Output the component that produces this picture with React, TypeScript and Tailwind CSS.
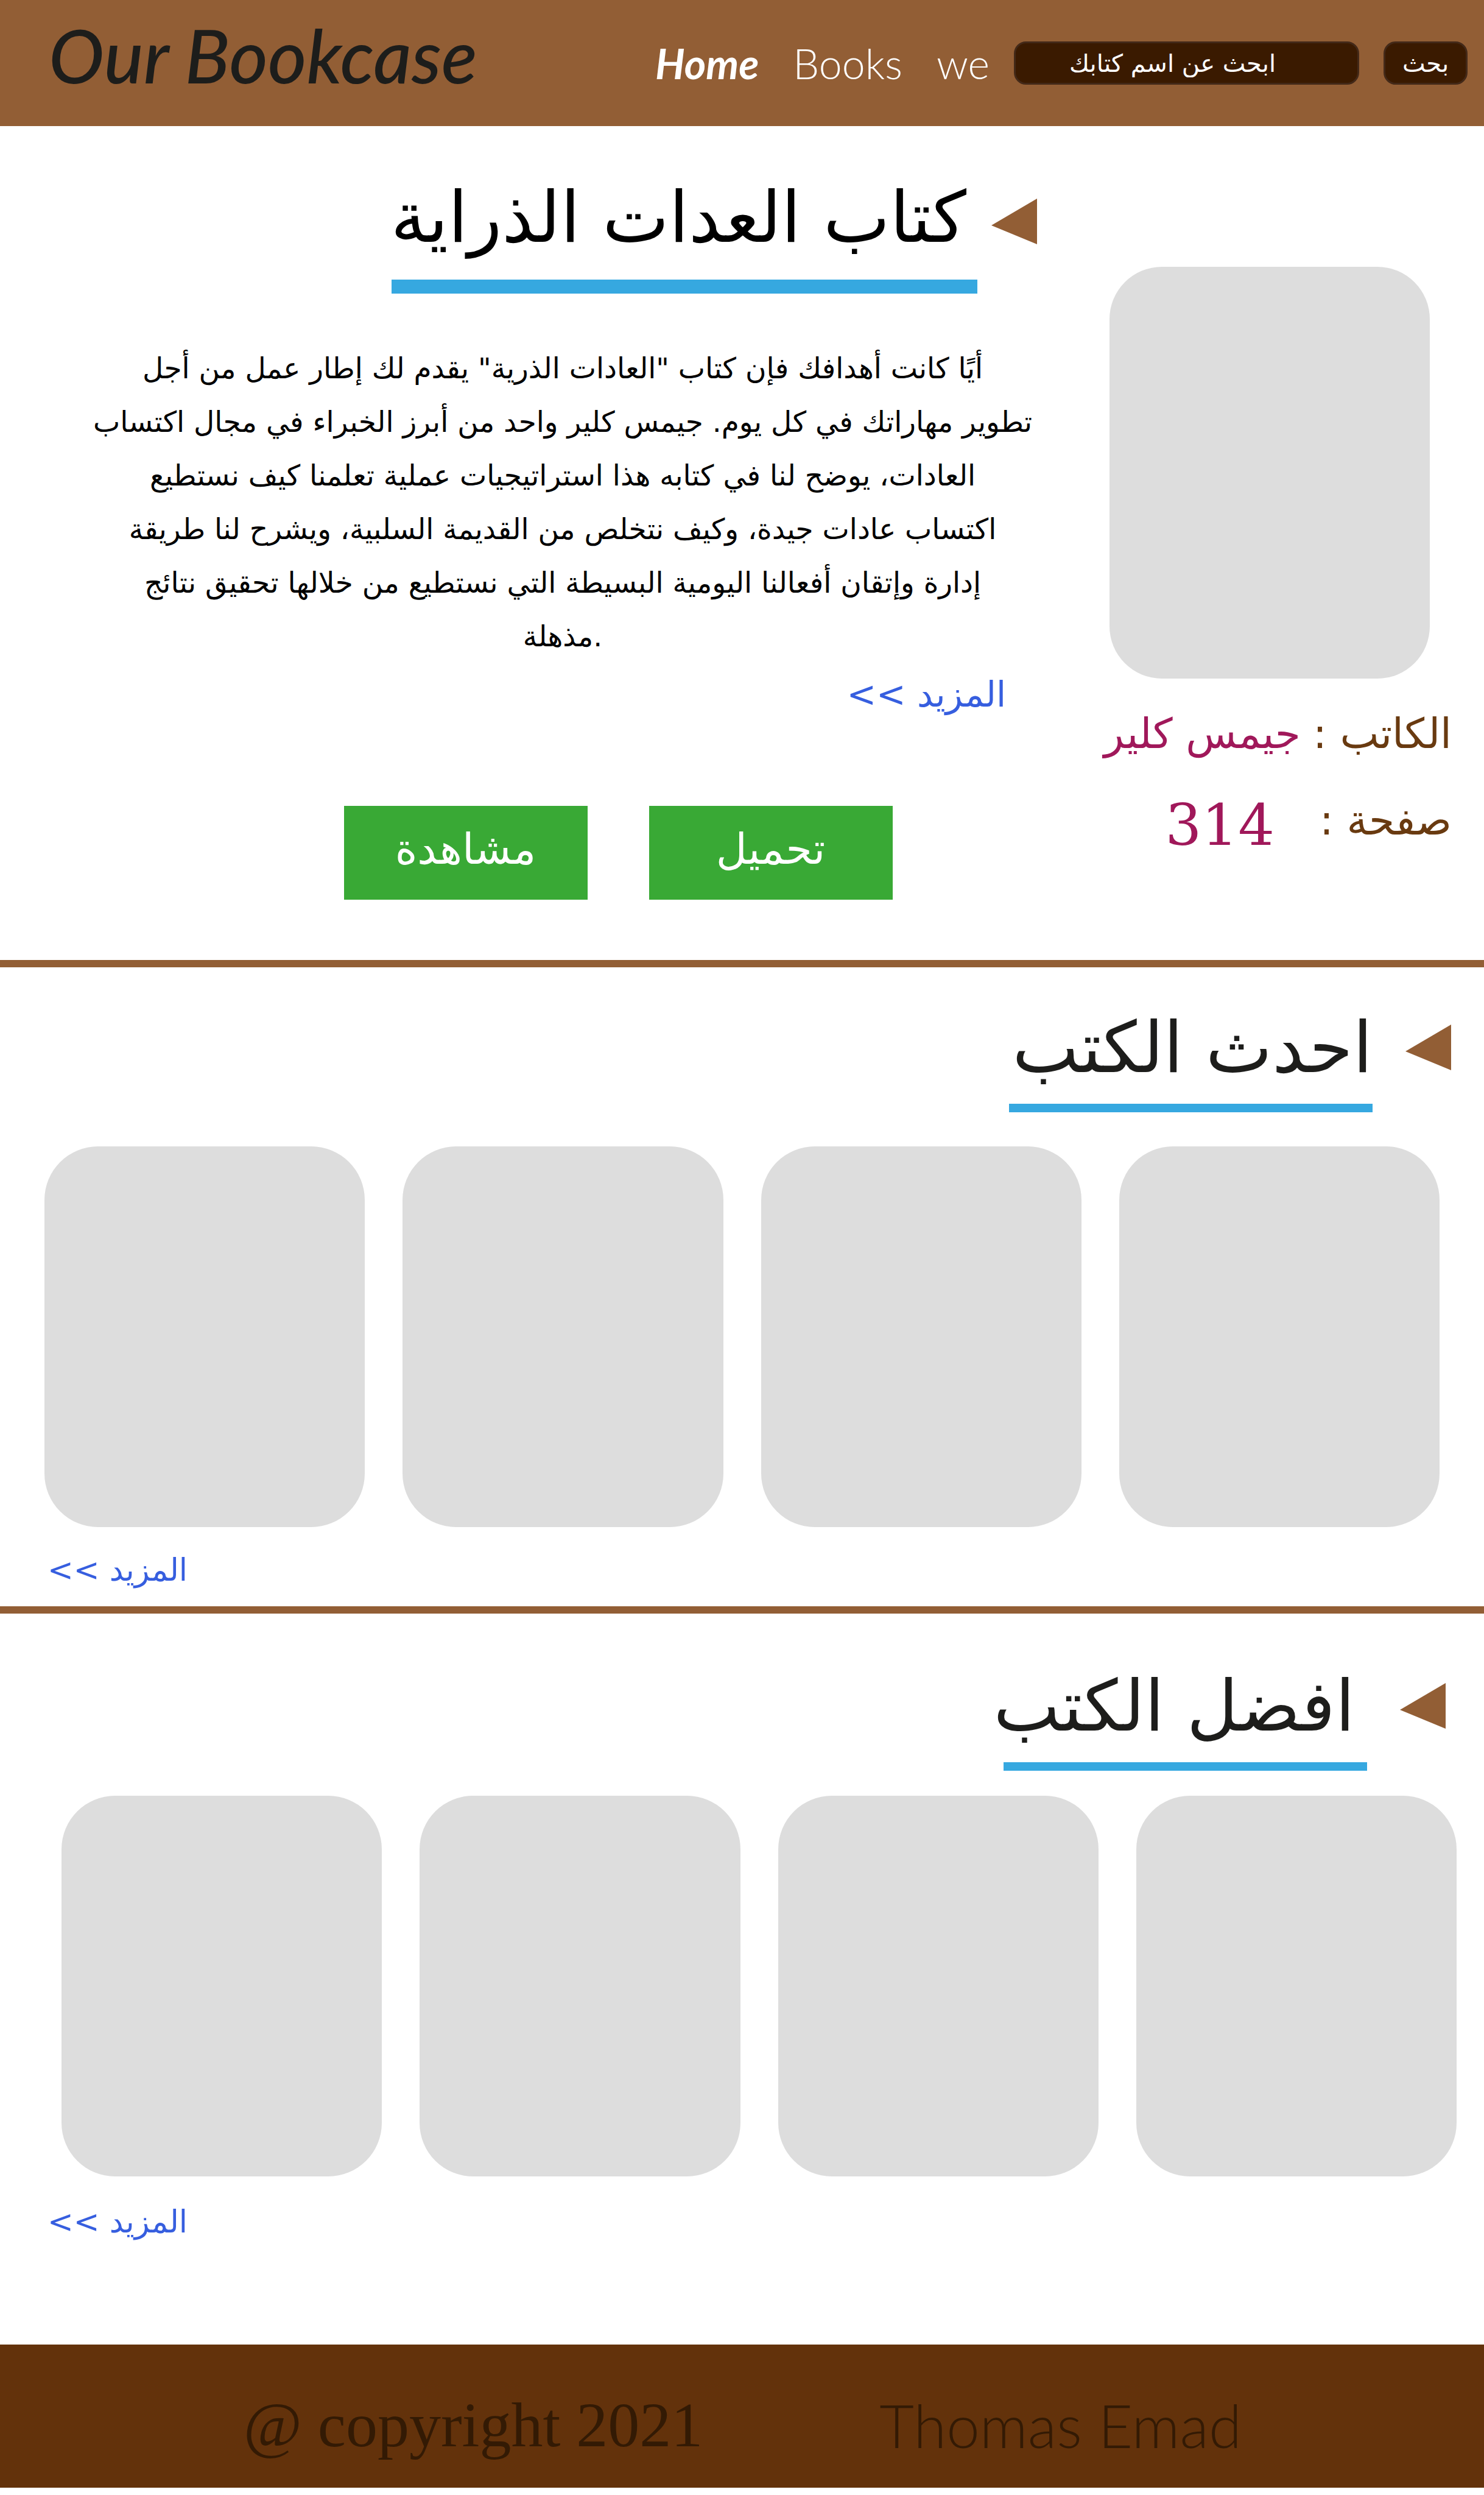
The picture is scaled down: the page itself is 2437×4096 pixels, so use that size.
import React from "react";

const arabic = "font-['DejaVu_Sans',sans-serif]";

function Marker({ className }: { className: string }) {
  return (
    <svg viewBox="0 0 75 75" className={`h-[75px] w-[75px] shrink-0 text-[#925e35] ${className}`} aria-hidden="true">
      <path d="M75 0V75L0 44Z" fill="currentColor" />
    </svg>
  );
}

function BookShelf({ count, className }: { count: number; className: string }) {
  return (
    <ul className={`grid grid-cols-4 gap-[62px] ${className}`}>
      {Array.from({ length: count }, (_, i) => (
        <li key={i} className="h-[625px] rounded-[88px] bg-[#dddddd]" />
      ))}
    </ul>
  );
}

function Header() {
  return (
    <header className="flex h-[207px] items-center bg-[#925e35] pr-[27px] pl-[80px] font-['Lato',sans-serif] text-white">
      <a href="#" className="mr-auto pb-[28px] text-[122px] leading-none font-medium whitespace-nowrap text-[#1d1d1b] italic">
        Our Bookcase
      </a>
      <nav className="flex items-center gap-[56px] text-[68px] leading-none">
        <a href="#home" className="font-bold italic">Home</a>
        <a href="#books" className="font-light">Books</a>
        <a href="#we" className="font-light">we</a>
      </nav>
      <form className="ml-[40px] flex gap-[40px] font-['DejaVu_Sans',sans-serif] text-[40px]" dir="ltr">
        <input
          type="text"
          dir="rtl"
          aria-label="ابحث عن اسم كتابك"
          placeholder="ابحث عن اسم كتابك"
          className="h-[71px] w-[567px] rounded-[20px] border-[3px] border-[#432918] bg-[#3a1a00] pr-[46px] text-center text-white placeholder:text-white"
        />
        <button type="button" className="h-[71px] w-[138px] rounded-[20px] border-[3px] border-[#432918] bg-[#3a1a00]">
          بحث
        </button>
      </form>
    </header>
  );
}

function Hero() {
  return (
    <section className="flex justify-between pr-[45px] pb-[99px]">
      <div className="flex flex-1 flex-col pl-[148px]">
        <div className="mt-[90px] flex gap-[23px] pr-[75px]" dir="rtl">
          <Marker className="mt-[29px]" />
          <h1 className="w-[962px] border-b-[23px] border-[#36a8e0] pr-[18px] pb-[42px] text-[116px] leading-[120px] whitespace-nowrap text-black">
            كتاب العدات الذراية
          </h1>
        </div>
        <p className="mt-[79px] mr-[78px] text-center text-[47px] leading-[88px] whitespace-nowrap text-black">
          <span dir="rtl" className="block">أيًا كانت أهدافك فإن كتاب "العادات الذرية" يقدم لك إطار عمل من أجل</span>
          <span dir="rtl" className="block">تطوير مهاراتك في كل يوم. جيمس كلير واحد من أبرز الخبراء في مجال اكتساب</span>
          <span dir="rtl" className="block">العادات، يوضح لنا في كتابه هذا استراتيجيات عملية تعلمنا كيف نستطيع</span>
          <span dir="rtl" className="block">اكتساب عادات جيدة، وكيف نتخلص من القديمة السلبية، ويشرح لنا طريقة</span>
          <span dir="rtl" className="block">إدارة وإتقان أفعالنا اليومية البسيطة التي نستطيع من خلالها تحقيق نتائج</span>
          <span dir="ltr" className="block">مذهلة.</span>
        </p>
        <a href="#more" dir="rtl" className="mt-[11px] mr-[126px] self-end text-[58px] leading-[80px] text-[#365edf]">
          المزيد &gt;&gt;
        </a>
        <div className="mt-[143px] flex justify-center gap-[101px] pl-[104px] text-[70px] text-white">
          <button type="button" className="h-[154px] w-[400px] bg-[#39a935] pb-[12px]">مشاهدة</button>
          <button type="button" className="h-[154px] w-[400px] bg-[#39a935] pb-[12px]">تحميل</button>
        </div>
      </div>
      <aside className="flex w-[614px] flex-col">
        <div className="mt-[231px] h-[676px] w-[526px] self-center rounded-[86px] bg-[#dddddd]" />
        <dl dir="rtl" className="pr-[8px] text-[68px] leading-[80px] whitespace-nowrap text-[#693a10]">
          <div className="mt-[51px] flex gap-[20px]">
            <dt>الكاتب :</dt>
            <dd className="text-[#a0185a]">جيمس كلير</dd>
          </div>
          <div className="mt-[62px] flex gap-[74px]">
            <dt>صفحة :</dt>
            <dd className="pt-[8px] font-['DejaVu_Serif',serif] text-[94px] text-[#a0185a]">314</dd>
          </div>
        </dl>
      </aside>
    </section>
  );
}

function Section({ title, head, heading, shelf, more, className }: {
  title: string;
  head: string;
  heading: string;
  shelf: string;
  more: string;
  className: string;
}) {
  return (
    <section className={`flex flex-col border-t-[12px] border-[#925e35] ${className}`}>
      <div dir="rtl" className={`flex gap-[54px] ${head}`}>
        <Marker className="mt-[22px]" />
        <h2 className={`w-[597px] border-b-[14px] border-[#36a8e0] pb-[32px] text-[116px] leading-[120px] whitespace-nowrap text-[#1d1d1b] ${heading}`}>
          {title}
        </h2>
      </div>
      <BookShelf count={4} className={shelf} />
      <a href="#more" dir="rtl" className={`ml-[78px] self-start text-[51px] leading-[60px] text-[#365edf] ${more}`}>
        المزيد &gt;&gt;
      </a>
    </section>
  );
}

export default function App() {
  return (
    <div className={`flex min-h-screen w-full flex-col bg-white ${arabic}`}>
      <Header />
      <main>
        <Hero />
        <Section
          title="احدث الكتب"
          className="pb-[29px]"
          head="mt-[72px] pr-[54px]"
          heading=""
          shelf="mt-[56px] px-[73px]"
          more="mt-[41px]"
        />
        <Section
          title="افضل الكتب"
          className="pb-[171px]"
          head="mt-[92px] pr-[63px]"
          heading="pr-[20px]"
          shelf="mt-[41px] pr-[45px] pl-[101px]"
          more="mt-[45px]"
        />
      </main>
      <footer className="mb-[11px] flex h-[235px] items-center gap-[290px] bg-[#63320b] pt-[28px] pl-[400px] leading-none whitespace-nowrap text-[#331a04]">
        <p className="font-['Liberation_Serif',serif] text-[104px]">@ copyright 2021</p>
        <p className="font-['Lato',sans-serif] text-[98px] font-light">Thomas Emad</p>
      </footer>
    </div>
  );
}
